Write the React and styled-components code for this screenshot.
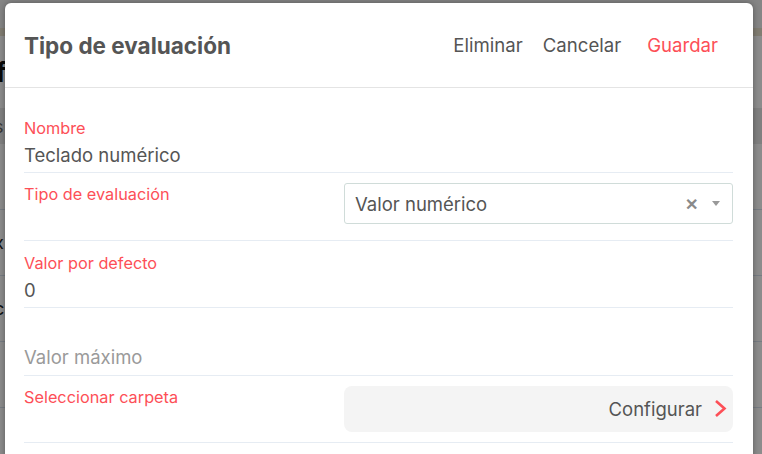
import React from "react";
import styled, { createGlobalStyle } from "styled-components";

const GlobalStyle = createGlobalStyle`
  *, *::before, *::after {
    box-sizing: border-box;
  }
  html, body {
    margin: 0;
    padding: 0;
    width: 762px;
    height: 454px;
    overflow: hidden;
    font-family: Inter, "Noto Sans", sans-serif;
    background: #fff;
  }
`;

const RED = "#fd4f57";

const Page = styled.div`
  position: relative;
  width: 762px;
  height: 454px;
  overflow: hidden;
`;

const BackTop = styled.div`
  height: 36px;
  background: #f2f2f2;
  border-bottom: 8px solid #ece3cf;
`;

const BackTitle = styled.div`
  height: 72px;
  display: flex;
  align-items: center;
  margin-left: -4px;
  font-size: 26px;
  font-weight: 700;
  color: #111;
`;

const BackBar = styled.div`
  height: 36px;
  display: flex;
  align-items: center;
  margin-left: -6px;
  background: #eaeaea;
  color: #666;
  font-size: 18px;
`;

const BackRow = styled.div`
  height: 66px;
  display: flex;
  align-items: center;
  margin-left: -6px;
  border-bottom: 1px solid #d9e2ee;
  color: #222;
  font-size: 18px;
`;

const Overlay = styled.div`
  position: absolute;
  inset: 0;
  background: rgba(0, 0, 0, 0.45);
`;

const Modal = styled.div`
  position: absolute;
  left: 5px;
  top: 3px;
  width: 748px;
  height: 480px;
  background: #fff;
  border-radius: 6px;
  box-shadow: 0 0 6px rgba(0, 0, 0, 0.35);
`;

const Header = styled.div`
  height: 85px;
  display: flex;
  align-items: center;
  padding: 0 35px 0 19px;
  border-bottom: 1px solid #e4e4e4;
`;

const Title = styled.h1`
  flex: 1;
  margin: 0;
  font-size: 22.5px;
  font-weight: 700;
  color: #555;
`;

const Action = styled.button`
  border: none;
  background: none;
  padding: 0;
  margin-left: ${(p) => p.$gap}px;
  font-family: inherit;
  font-size: 18.6px;
  color: ${(p) => (p.$primary ? RED : "#555")};
  cursor: pointer;
`;

const Body = styled.div`
  padding: 17.5px 20px 0 19px;
`;

const Row = styled.div`
  display: ${(p) => (p.$split ? "grid" : "block")};
  grid-template-columns: 320px 1fr;
  align-items: start;
  height: 67.5px;
  padding: ${(p) => (p.$split ? "0" : "12px 0 0")};
  border-bottom: 1px solid #e6ecf3;
`;

const Label = styled.div`
  font-size: 16.3px;
  line-height: 20px;
  min-height: 20px;
  color: ${RED};
  padding-top: ${(p) => (p.$split ? 11 : 0)}px;
`;

const Value = styled.div`
  margin-top: 5px;
  font-size: 18.5px;
  line-height: 24px;
  color: ${(p) => (p.$placeholder ? "#9a9a9a" : "#555")};
`;

const Select = styled.div`
  display: flex;
  align-items: center;
  height: 41px;
  margin-top: 10px;
  padding: 0 12px 0 10px;
  border: 1px solid #d0dcd9;
  border-radius: 3px;
  font-size: 18.5px;
  color: #555;
`;

const SelectText = styled.span`
  flex: 1;
`;

const ClearIcon = styled.span`
  color: #8a8a8a;
  font-size: 16px;
  font-weight: 700;
  margin-right: 14px;
`;

const Caret = styled.span`
  width: 0;
  height: 0;
  border-left: 4px solid transparent;
  border-right: 4px solid transparent;
  border-top: 5px solid #999;
`;

const ConfigButton = styled.button`
  display: flex;
  align-items: center;
  justify-content: flex-end;
  gap: 11px;
  width: 100%;
  height: 46px;
  margin-top: 10px;
  padding: 0 5px 0 0;
  border: none;
  border-radius: 8px;
  background: #f4f4f4;
  font-family: inherit;
  font-size: 18.5px;
  color: #555;
`;

const Chevron = () => (
  <svg width="15" height="19" viewBox="0 0 15 19">
    <path d="M3 2 L11.5 9.5 L3 17" fill="none" stroke={RED} strokeWidth="2.6" />
  </svg>
);

export default function App() {
  return (
    <Page>
      <GlobalStyle />
      <BackTop />
      <BackTitle>f</BackTitle>
      <BackBar>s</BackBar>
      <BackRow />
      <BackRow>x</BackRow>
      <BackRow>c</BackRow>
      <BackRow>l</BackRow>
      <BackRow>l</BackRow>
      <Overlay />
      <Modal>
        <Header>
          <Title>Tipo de evaluación</Title>
          <Action $gap={0}>Eliminar</Action>
          <Action $gap={20}>Cancelar</Action>
          <Action $gap={26} $primary>Guardar</Action>
        </Header>
        <Body>
          <Row>
            <Label>Nombre</Label>
            <Value>Teclado numérico</Value>
          </Row>
          <Row $split>
            <Label $split>Tipo de evaluación</Label>
            <Select>
              <SelectText>Valor numérico</SelectText>
              <ClearIcon>✕</ClearIcon>
              <Caret />
            </Select>
          </Row>
          <Row>
            <Label>Valor por defecto</Label>
            <Value>0</Value>
          </Row>
          <Row>
            <Label />
            <Value $placeholder>Valor máximo</Value>
          </Row>
          <Row $split>
            <Label $split>Seleccionar carpeta</Label>
            <ConfigButton>
              Configurar
              <Chevron />
            </ConfigButton>
          </Row>
        </Body>
      </Modal>
    </Page>
  );
}
